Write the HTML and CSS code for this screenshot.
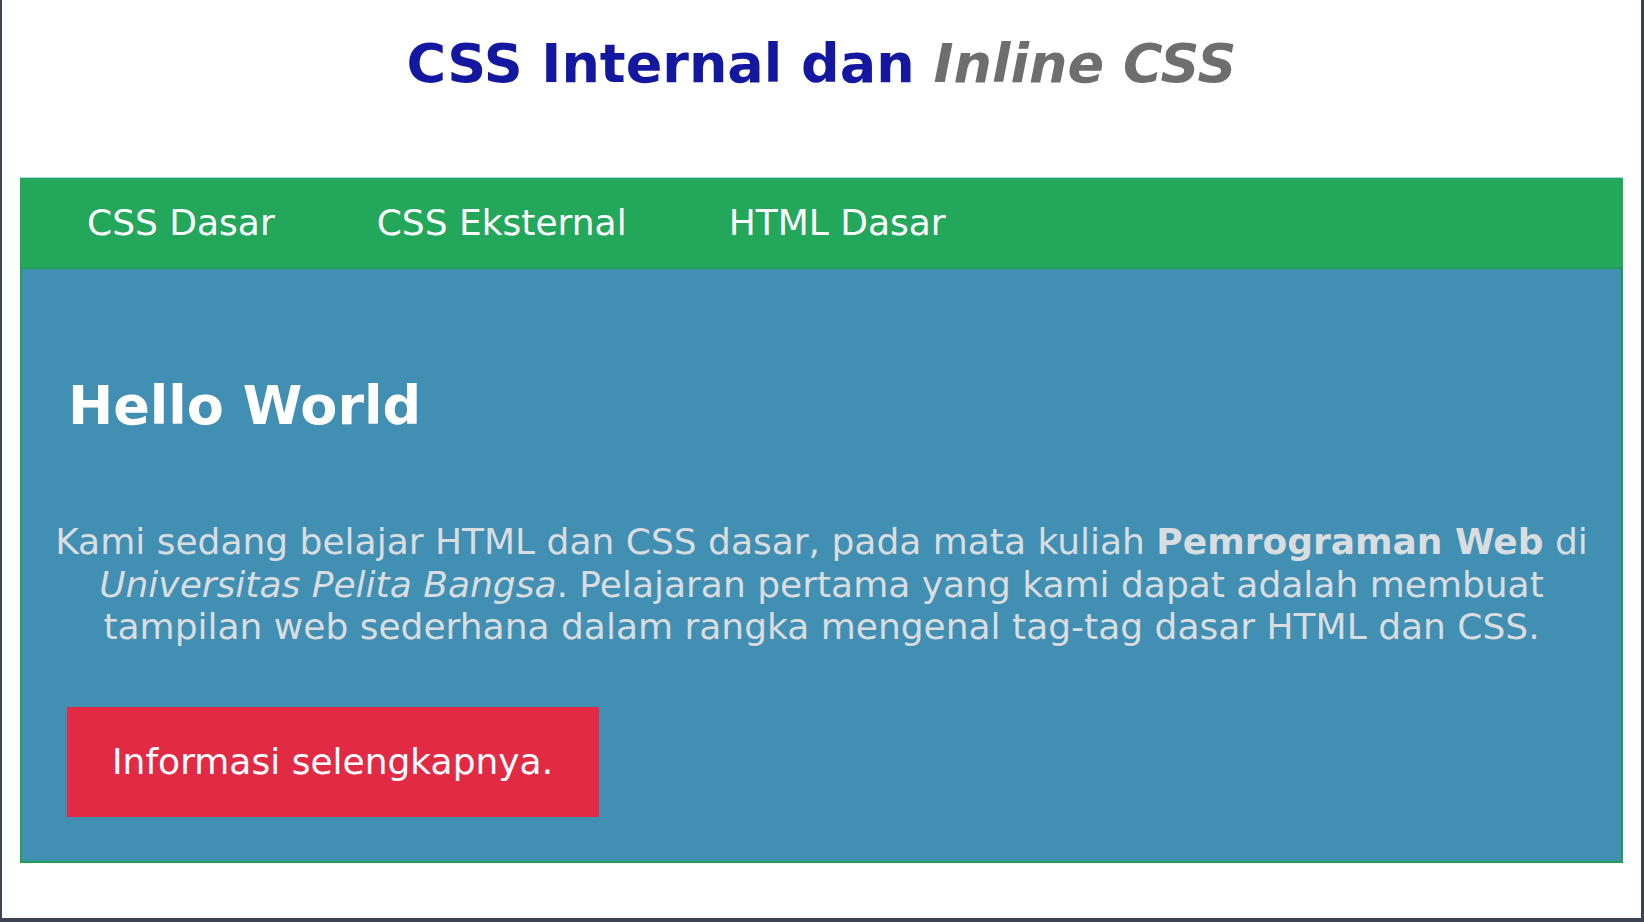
FILE: index.html
```html
<!DOCTYPE html>
<html lang="id">
<head>
<meta charset="utf-8">
<title>CSS Internal dan Inline CSS</title>
<link rel="stylesheet" href="styles.css">
</head>
<body>
<div class="frame">
  <h1 class="title">CSS Internal dan <em class="title-em">Inline CSS</em></h1>
  <div class="container">
    <nav class="nav">
      <a class="nav-link" href="#">CSS Dasar</a>
      <a class="nav-link" href="#">CSS Eksternal</a>
      <a class="nav-link" href="#">HTML Dasar</a>
    </nav>
    <section class="hero">
      <h2 class="hero-title">Hello World</h2>
      <p class="hero-text">Kami sedang belajar HTML dan CSS dasar, pada mata kuliah <strong>Pemrograman Web</strong> di <em>Universitas Pelita Bangsa</em>. Pelajaran pertama yang kami dapat adalah membuat tampilan web sederhana dalam rangka mengenal tag-tag dasar HTML dan CSS.</p>
      <div class="hero-action">
        <a class="btn" href="#">Informasi selengkapnya.</a>
      </div>
    </section>
  </div>
</div>
</body>
</html>
```
FILE: styles.css
```css
html, body {
  margin: 0;
  padding: 0;
  background: #ffffff;
}

body {
  font-family: "DejaVu Sans", "Noto Sans", sans-serif;
  font-size: 36px;
  line-height: normal;
}

.frame {
  box-sizing: border-box;
  height: 922px;
  padding: 0 18px;
  border-left: 2px solid #3c4352;
  border-right: 3px solid #3c4352;
  border-bottom: 4px solid #3c4352;
  overflow: hidden;
}

.title {
  margin: 32px 0 0;
  font-size: 54px;
  font-weight: bold;
  text-align: center;
  color: #14179f;
  line-height: normal;
}

.title-em {
  font-style: italic;
  color: #6e6e6e;
}

.container {
  margin-top: 82px;
}

.nav {
  display: flex;
  background: #22a75b;
  border-top: 1px solid #a6d9ea;
  padding: 24px 0 24px 16px;
}

.nav-link {
  color: #ffffff;
  text-decoration: none;
  padding: 0 51px;
  line-height: normal;
}

.hero {
  background: #418fb2;
  border: 2px solid #1f9e55;
  padding: 105px 24px 44px;
}

.hero-title {
  margin: 0 0 84px;
  padding-left: 22px;
  font-size: 54px;
  font-weight: bold;
  color: #ffffff;
  line-height: normal;
}

.hero-text {
  margin: 0 0 58px;
  text-align: center;
  color: #dadde0;
  line-height: 42.5px;
}

.hero-action {
  padding-left: 21px;
}

.btn {
  display: inline-block;
  background: #e22a45;
  color: #ffffff;
  text-decoration: none;
  padding: 34.5px 46px 34.5px 45px;
  line-height: normal;
}
```
